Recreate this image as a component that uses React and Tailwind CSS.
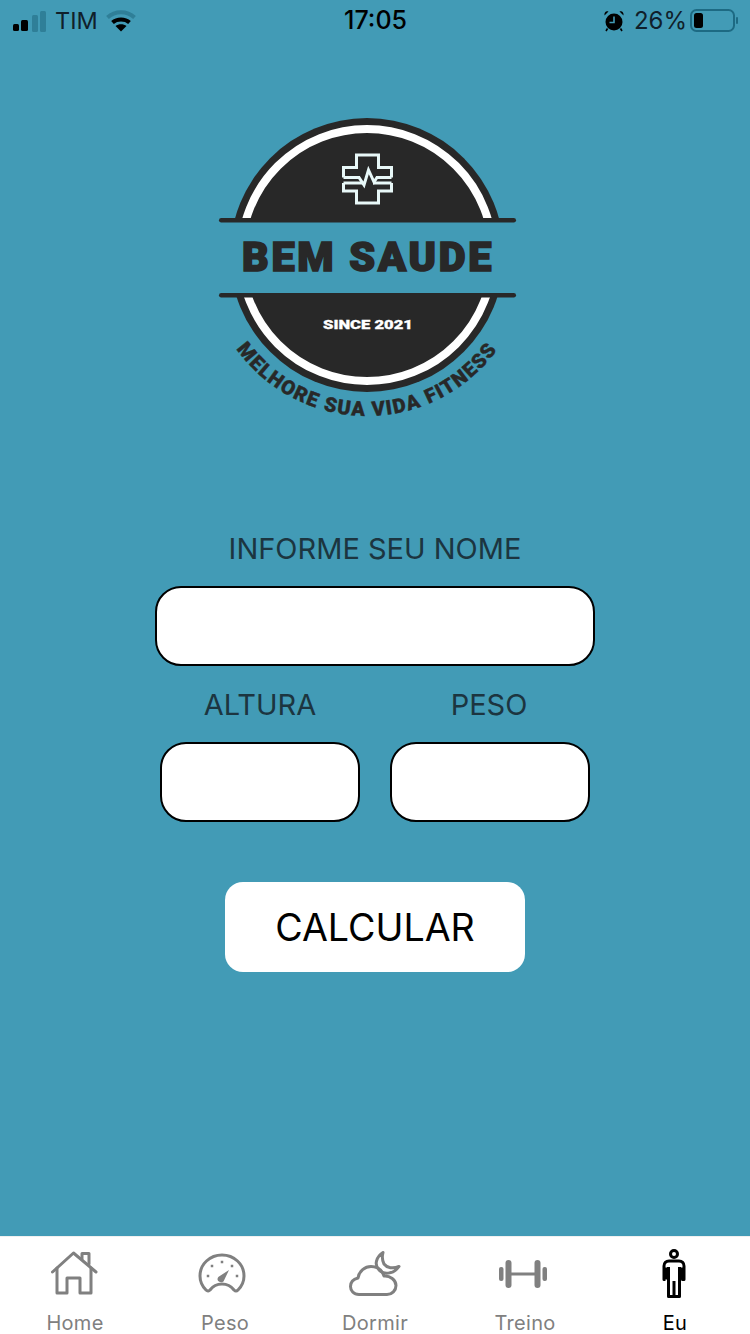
const Signal = () => (
  <svg width="34" height="22" viewBox="0 0 34 22">
    <rect x="0" y="14" width="6" height="7" rx="1.5" fill="#000" />
    <rect x="8" y="10" width="7" height="11" rx="1.5" fill="#000" />
    <rect x="19" y="5" width="6" height="17" rx="1.5" fill="#2f7f98" />
    <rect x="27" y="1" width="6" height="21" rx="1.5" fill="#2f7f98" />
  </svg>
);

const Wifi = () => (
  <svg width="30" height="22" viewBox="0 0 30 22" fill="none" strokeWidth="4">
    <path d="M1.5 7.5C9 0.5 21 0.5 28.5 7.5" stroke="#2f7f98" />
    <path d="M6.5 12.5C11 8.5 19 8.5 23.5 12.5" stroke="#000" />
    <path d="M15 21.5L9.5 16C12.5 13.6 17.5 13.6 20.5 16Z" fill="#000" />
  </svg>
);

const Alarm = () => (
  <svg width="20" height="22" viewBox="0 0 20 22">
    <circle cx="10" cy="12" r="8.5" fill="#000" />
    <path d="M0.5 5.5L4.5 1.5C2 0.5 0 2.5 0.5 5.5ZM19.5 5.5L15.5 1.5C18 0.5 20 2.5 19.5 5.5Z" fill="#000" />
    <path d="M10 6.5V12.5H5.5" stroke="#429bb6" strokeWidth="1.6" fill="none" />
    <path d="M3.5 18.5L2 21M16.5 18.5L18 21" stroke="#000" strokeWidth="1.6" />
  </svg>
);

const Battery = () => (
  <svg width="48" height="24" viewBox="0 0 48 24">
    <rect x="1" y="1" width="43" height="21" rx="5.5" fill="none" stroke="#1d6a83" strokeWidth="2" />
    <rect x="4" y="4" width="9" height="15" rx="2.5" fill="#000" />
    <rect x="46" y="8" width="2" height="7" rx="1" fill="#1d6a83" />
  </svg>
);

const Logo = () => (
  <svg width="300" height="306" viewBox="0 0 300 306" className="block">
    <defs>
      <path id="sloganArc" d="M8 216.7A161 161 0 0 0 290 216.7" />
      <clipPath id="logoTop"><rect x="0" y="0" width="300" height="104" /></clipPath>
      <clipPath id="logoBottom"><rect x="0" y="178" width="300" height="126" /></clipPath>
    </defs>
    {[ 'url(#logoTop)', 'url(#logoBottom)' ].map((clip) => (
      <g key={clip} clipPath={clip}>
        <circle cx="149" cy="139" r="137" fill="#282828" />
        <circle cx="149" cy="139" r="126" fill="none" stroke="#fff" strokeWidth="8" />
      </g>
    ))}
    <rect x="1" y="102" width="297" height="4.5" rx="2.25" fill="#282828" />
    <rect x="1" y="177" width="297" height="4.5" rx="2.25" fill="#282828" />

    {/* cross with pulse */}
    <g fill="none" stroke="#e8f8f8" strokeWidth="3">
      <path d="M125.5 61.5V51.5H138.5V39H160.5V51.5H173.5V61.5" />
      <path d="M125.5 61.5H141L146 69L150.5 54L156 66L159 61.5H173.5" />
      <path d="M125.5 67H144M155 67H173.5" />
      <path d="M125.5 67V75H138.5V87H160.5V75H173.5V67" />
    </g>

    <text x="150" y="155" textAnchor="middle" fontFamily="'Roboto', sans-serif" fontWeight="900" fontSize="40" letterSpacing="2.6" fill="#282828" stroke="#282828" strokeWidth="1.6" textLength="252" lengthAdjust="spacingAndGlyphs">BEM SAUDE</text>
    <text x="150" y="213" textAnchor="middle" fontFamily="'Roboto', sans-serif" fontWeight="900" fontSize="13.5" fill="#fff" stroke="#fff" strokeWidth="0.3" textLength="90" lengthAdjust="spacingAndGlyphs">SINCE 2021</text>
    <text fontFamily="'Roboto', sans-serif" fontWeight="900" fontSize="20" fill="#282828" stroke="#282828" strokeWidth="0.4" letterSpacing="1.4">
      <textPath href="#sloganArc" startOffset="50%" textAnchor="middle">MELHORE SUA VIDA FITNESS</textPath>
    </text>
  </svg>
);

const HomeIcon = () => (
  <svg width="48" height="46" viewBox="0 0 48 46" fill="none" stroke="#808080" strokeWidth="3" strokeLinejoin="round" strokeLinecap="round">
    <path d="M1.5 21L22.5 2L45 21" />
    <path d="M6 17V42H16V27H29V42H40V17" />
    <path d="M31 8V2.5H38V13" />
  </svg>
);

const GaugeIcon = () => (
  <svg width="48" height="40" viewBox="0 0 48 40" fill="none" stroke="#808080" strokeWidth="3" strokeLinecap="round" className="mr-[6px] mb-[3px]">
    <path d="M8 37C4 33 2 28 2 23C2 11 12 2 24 2C36 2 46 11 46 23C46 28 44 33 40 37C38.5 38.5 37 38 36 37C33 33 29 31 24 31C19 31 15 33 12 37C11 38 9.5 38.5 8 37Z" />
    <path d="M31 17L25.5 28.5C23.5 30 20 29 19.5 26.5C19.5 25 20 24 21 23.5Z" fill="#808080" stroke="none" />
    <g fill="#808080" stroke="none">
      <rect x="22.75" y="7.75" width="2.5" height="2.5" />
      <rect x="12.75" y="11.75" width="2.5" height="2.5" />
      <rect x="32.75" y="11.75" width="2.5" height="2.5" />
      <rect x="8.75" y="21.75" width="2.5" height="2.5" />
      <rect x="37.75" y="21.75" width="2.5" height="2.5" />
    </g>
  </svg>
);

const CloudMoonIcon = () => (
  <svg width="52" height="46" viewBox="0 0 52 46" fill="none" stroke="#808080" strokeWidth="3" strokeLinecap="round" strokeLinejoin="round">
    <path d="M10 43.5C4.5 43.5 1.5 39.5 1.5 35.5C1.5 31 5 28 9 27C10 20 16 15.5 22 15.5C28 15.5 33 19 35 25C41 24.5 47 29 47 34.5C47 39.5 43 43.5 38 43.5Z" />
    <path d="M34 1.5C27 6 25 14 30 19C34 23.5 44 24 50 15.5C44 18 38 17 35 13C33 9 33 5 34 1.5Z" />
  </svg>
);

const DumbbellIcon = () => (
  <svg width="48" height="30" viewBox="0 0 48 30" className="mr-[5px]">
    <g fill="#808080">
      <rect x="0" y="8" width="4.5" height="14" rx="2" />
      <rect x="6.5" y="1" width="6" height="28" rx="3" />
      <rect x="12" y="13.5" width="24" height="3" />
      <rect x="35.5" y="1" width="6" height="28" rx="3" />
      <rect x="43.5" y="8" width="4.5" height="14" rx="2" />
    </g>
  </svg>
);

const PersonIcon = () => (
  <svg width="24" height="50" viewBox="0 0 24 50" fill="none" stroke="#000" strokeWidth="3" strokeLinejoin="round" className="mr-[2px]">
    <circle cx="12" cy="5" r="3.5" />
    <path d="M3.5 30.5H2V17C2 14 4 12 7 12H17C20 12 22 14 22 17V30.5H20.5V18.5" />
    <path d="M3.5 30.5V18.5" />
    <path d="M6.5 18V47.5H17.5V18" />
    <path d="M12 32V47.5" />
  </svg>
);

const tabs = [
  { label: 'Home', icon: HomeIcon },
  { label: 'Peso', icon: GaugeIcon },
  { label: 'Dormir', icon: CloudMoonIcon },
  { label: 'Treino', icon: DumbbellIcon },
  { label: 'Eu', icon: PersonIcon, active: true },
];

const App = () => {
  return (
    <div className="w-[750px] h-[1334px] flex flex-col bg-[#429bb6] overflow-hidden font-['Inter',sans-serif]">
      {/* Status bar */}
      <div className="h-[42px] shrink-0 flex items-center justify-between pl-[13px] pr-[12px] text-black text-[24px]">
        <div className="flex-1 flex items-center gap-2">
          <Signal />
          <span className="font-normal text-[#10202a] text-[23.5px]">TIM</span>
          <Wifi />
        </div>
        <span className="font-medium text-[25px]">17:05</span>
        <div className="flex-1 flex items-center justify-end gap-[3px]">
          <span className="mr-[7px]"><Alarm /></span>
          <span className="text-[#10202a]">26%</span>
          <Battery />
        </div>
      </div>

      {/* Logo */}
      <div className="mt-[74px] pl-[218px]">
        <Logo />
      </div>

      {/* Form */}
      <div className="flex flex-col items-center">
        <label className="mt-[107px] text-[29px] leading-[40px] text-[#1c3540]">INFORME SEU NOME</label>
        <input className="mt-[17px] w-[440px] h-[80px] rounded-[26px] border-2 border-black bg-white" />
        <div className="mt-[19px] flex gap-[30px]">
          <div className="flex flex-col items-center w-[200px]">
            <label className="text-[29px] leading-[40px] text-[#1c3540]">ALTURA</label>
            <input className="mt-[17px] w-[200px] h-[80px] rounded-[26px] border-2 border-black bg-white" />
          </div>
          <div className="flex flex-col items-center w-[200px]">
            <label className="mr-[2px] text-[29px] leading-[40px] text-[#1c3540]">PESO</label>
            <input className="mt-[17px] w-[200px] h-[80px] rounded-[26px] border-2 border-black bg-white" />
          </div>
        </div>
        <button className="mt-[60px] pt-[2px] w-[300px] h-[90px] rounded-[18px] bg-white text-black text-[37.6px]">CALCULAR</button>
      </div>

      {/* Tab bar */}
      <div className="mt-auto h-[98px] shrink-0 bg-white border-t border-[#f0f0f0] grid grid-cols-5">
        {tabs.map(({ label, icon: Icon, active }) => (
          <div key={label} className="flex flex-col items-center">
            <div className="h-[74px] flex items-center justify-center">
              <Icon />
            </div>
            <span className={`text-[20px] leading-[24px] tracking-[0.3px] ${active ? 'text-black' : 'text-[#808080]'}`}>{label}</span>
          </div>
        ))}
      </div>
    </div>
  );
};

export default App;
